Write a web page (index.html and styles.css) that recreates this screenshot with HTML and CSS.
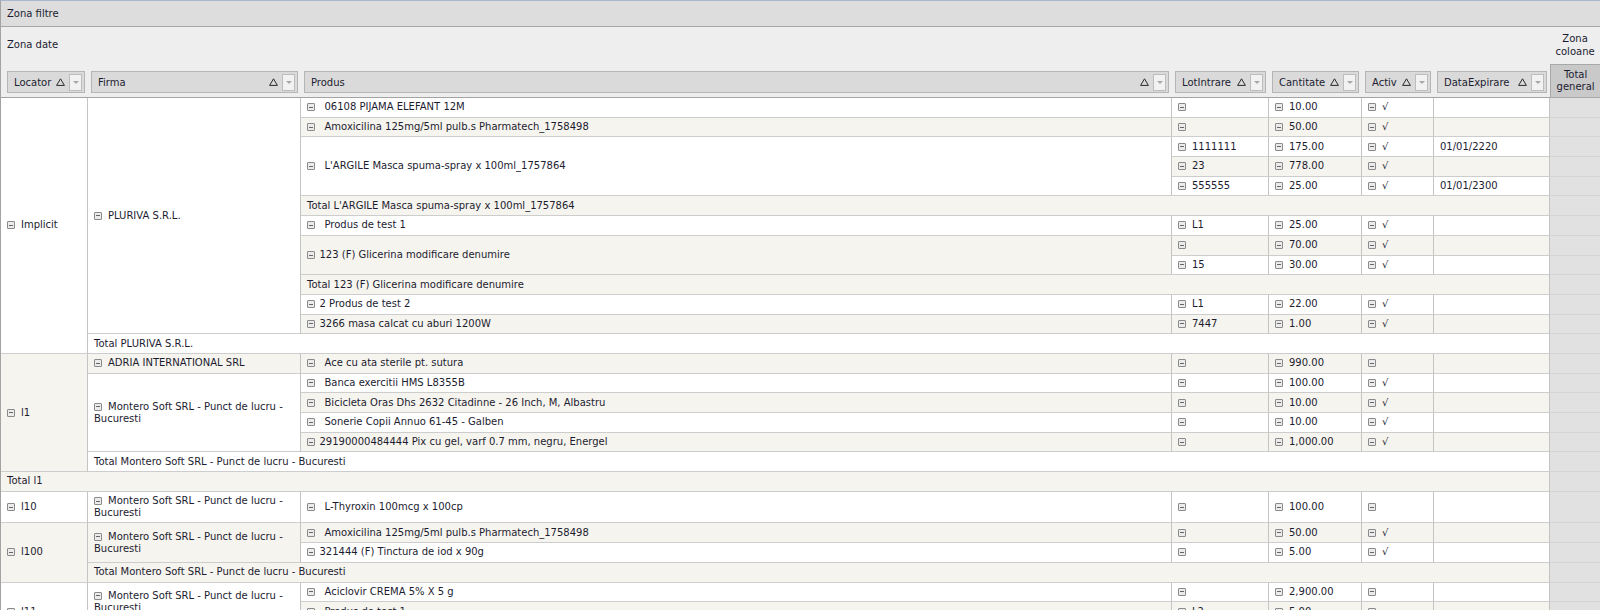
FILE: index.html
```html
<!DOCTYPE html>
<html>
<head>
    <title>Pivot grid</title>
    <link rel="stylesheet" href="styles.css">
</head>
<body>
    <div class="pivot">
        <div class="filter-zone">Zona filtre</div>
        <table class="grid">
            <colgroup>
                <col class="c-loc"><col class="c-firma"><col class="c-prod"><col class="c-lot">
                <col class="c-cant"><col class="c-activ"><col class="c-data"><col class="c-total">
            </colgroup>
            <thead>
                <tr class="zone-row">
                    <td colspan="7">Zona date</td>
                    <td class="col-zone">Zona<br>coloane</td>
                </tr>
                <tr class="field-row">
                    <th class="first"><div class="field"><span class="fname">Locator</span><svg class="sort" viewBox="0 0 9 8"><path d="M4.5 0.8 L8.4 7.4 H0.6 Z"/></svg><span class="drop"></span></div></th>
                    <th><div class="field"><span class="fname">Firma</span><svg class="sort" viewBox="0 0 9 8"><path d="M4.5 0.8 L8.4 7.4 H0.6 Z"/></svg><span class="drop"></span></div></th>
                    <th><div class="field"><span class="fname">Produs</span><svg class="sort" viewBox="0 0 9 8"><path d="M4.5 0.8 L8.4 7.4 H0.6 Z"/></svg><span class="drop"></span></div></th>
                    <th><div class="field"><span class="fname">LotIntrare</span><svg class="sort" viewBox="0 0 9 8"><path d="M4.5 0.8 L8.4 7.4 H0.6 Z"/></svg><span class="drop"></span></div></th>
                    <th><div class="field"><span class="fname">Cantitate</span><svg class="sort" viewBox="0 0 9 8"><path d="M4.5 0.8 L8.4 7.4 H0.6 Z"/></svg><span class="drop"></span></div></th>
                    <th><div class="field"><span class="fname">Activ</span><svg class="sort" viewBox="0 0 9 8"><path d="M4.5 0.8 L8.4 7.4 H0.6 Z"/></svg><span class="drop"></span></div></th>
                    <th><div class="field"><span class="fname">DataExpirare</span><svg class="sort" viewBox="0 0 9 8"><path d="M4.5 0.8 L8.4 7.4 H0.6 Z"/></svg><span class="drop"></span></div></th>
                    <th class="total-head">Total<br>general</th>
                </tr>
            </thead>
            <tbody>
                <tr>
                    <td rowspan="13"><i class="ic"></i>Implicit</td>
                    <td rowspan="12"><i class="ic"></i>PLURIVA S.R.L.</td>
                    <td class="p"><i class="ic w"></i>06108 PIJAMA ELEFANT 12M</td>
                    <td><i class="ic"></i></td><td><i class="ic"></i>10.00</td><td><i class="ic"></i>√</td><td></td><td class="tg"></td>
                </tr>
                <tr class="alt">
                    <td class="p"><i class="ic w"></i>Amoxicilina 125mg/5ml pulb.s Pharmatech_1758498</td>
                    <td><i class="ic"></i></td><td><i class="ic"></i>50.00</td><td><i class="ic"></i>√</td><td></td><td class="tg"></td>
                </tr>
                <tr>
                    <td class="p" rowspan="3"><i class="ic w"></i>L'ARGILE Masca spuma-spray x 100ml_1757864</td>
                    <td><i class="ic"></i>1111111</td><td><i class="ic"></i>175.00</td><td><i class="ic"></i>√</td><td>01/01/2220</td><td class="tg"></td>
                </tr>
                <tr class="alt">
                    <td><i class="ic"></i>23</td><td><i class="ic"></i>778.00</td><td><i class="ic"></i>√</td><td></td><td class="tg"></td>
                </tr>
                <tr>
                    <td><i class="ic"></i>555555</td><td><i class="ic"></i>25.00</td><td><i class="ic"></i>√</td><td>01/01/2300</td><td class="tg"></td>
                </tr>
                <tr class="alt">
                    <td colspan="5">Total L'ARGILE Masca spuma-spray x 100ml_1757864</td><td class="tg"></td>
                </tr>
                <tr>
                    <td class="p"><i class="ic w"></i>Produs de test 1</td>
                    <td><i class="ic"></i>L1</td><td><i class="ic"></i>25.00</td><td><i class="ic"></i>√</td><td></td><td class="tg"></td>
                </tr>
                <tr class="alt">
                    <td class="p" rowspan="2"><i class="ic"></i>123 (F) Glicerina modificare denumire</td>
                    <td><i class="ic"></i></td><td><i class="ic"></i>70.00</td><td><i class="ic"></i>√</td><td></td><td class="tg"></td>
                </tr>
                <tr>
                    <td><i class="ic"></i>15</td><td><i class="ic"></i>30.00</td><td><i class="ic"></i>√</td><td></td><td class="tg"></td>
                </tr>
                <tr class="alt">
                    <td colspan="5">Total 123 (F) Glicerina modificare denumire</td><td class="tg"></td>
                </tr>
                <tr>
                    <td class="p"><i class="ic"></i>2 Produs de test 2</td>
                    <td><i class="ic"></i>L1</td><td><i class="ic"></i>22.00</td><td><i class="ic"></i>√</td><td></td><td class="tg"></td>
                </tr>
                <tr class="alt">
                    <td class="p"><i class="ic"></i>3266 masa calcat cu aburi 1200W</td>
                    <td><i class="ic"></i>7447</td><td><i class="ic"></i>1.00</td><td><i class="ic"></i>√</td><td></td><td class="tg"></td>
                </tr>
                <tr>
                    <td colspan="6">Total PLURIVA S.R.L.</td><td class="tg"></td>
                </tr>
                <tr class="alt">
                    <td rowspan="6"><i class="ic"></i>l1</td>
                    <td><i class="ic"></i>ADRIA INTERNATIONAL SRL</td>
                    <td class="p"><i class="ic w"></i>Ace cu ata sterile pt. sutura</td>
                    <td><i class="ic"></i></td><td><i class="ic"></i>990.00</td><td><i class="ic"></i></td><td></td><td class="tg"></td>
                </tr>
                <tr>
                    <td rowspan="4"><i class="ic"></i>Montero Soft SRL - Punct de lucru - Bucuresti</td>
                    <td class="p"><i class="ic w"></i>Banca exercitii HMS L8355B</td>
                    <td><i class="ic"></i></td><td><i class="ic"></i>100.00</td><td><i class="ic"></i>√</td><td></td><td class="tg"></td>
                </tr>
                <tr class="alt">
                    <td class="p"><i class="ic w"></i>Bicicleta Oras Dhs 2632 Citadinne - 26 Inch, M, Albastru</td>
                    <td><i class="ic"></i></td><td><i class="ic"></i>10.00</td><td><i class="ic"></i>√</td><td></td><td class="tg"></td>
                </tr>
                <tr>
                    <td class="p"><i class="ic w"></i>Sonerie Copii Annuo 61-45 - Galben</td>
                    <td><i class="ic"></i></td><td><i class="ic"></i>10.00</td><td><i class="ic"></i>√</td><td></td><td class="tg"></td>
                </tr>
                <tr class="alt">
                    <td class="p"><i class="ic"></i>29190000484444 Pix cu gel, varf 0.7 mm, negru, Energel</td>
                    <td><i class="ic"></i></td><td><i class="ic"></i>1,000.00</td><td><i class="ic"></i>√</td><td></td><td class="tg"></td>
                </tr>
                <tr>
                    <td colspan="6">Total Montero Soft SRL - Punct de lucru - Bucuresti</td><td class="tg"></td>
                </tr>
                <tr class="alt">
                    <td colspan="7">Total l1</td><td class="tg"></td>
                </tr>
                <tr>
                    <td><i class="ic"></i>l10</td>
                    <td><i class="ic"></i>Montero Soft SRL - Punct de lucru - Bucuresti</td>
                    <td class="p"><i class="ic w"></i>L-Thyroxin 100mcg x 100cp</td>
                    <td><i class="ic"></i></td><td><i class="ic"></i>100.00</td><td><i class="ic"></i></td><td></td><td class="tg"></td>
                </tr>
                <tr class="alt">
                    <td rowspan="3"><i class="ic"></i>l100</td>
                    <td rowspan="2"><i class="ic"></i>Montero Soft SRL - Punct de lucru - Bucuresti</td>
                    <td class="p"><i class="ic w"></i>Amoxicilina 125mg/5ml pulb.s Pharmatech_1758498</td>
                    <td><i class="ic"></i></td><td><i class="ic"></i>50.00</td><td><i class="ic"></i>√</td><td></td><td class="tg"></td>
                </tr>
                <tr>
                    <td class="p"><i class="ic"></i>321444 (F) Tinctura de iod x 90g</td>
                    <td><i class="ic"></i></td><td><i class="ic"></i>5.00</td><td><i class="ic"></i>√</td><td></td><td class="tg"></td>
                </tr>
                <tr class="alt">
                    <td colspan="6">Total Montero Soft SRL - Punct de lucru - Bucuresti</td><td class="tg"></td>
                </tr>
                <tr>
                    <td rowspan="3"><i class="ic"></i>l11</td>
                    <td rowspan="2"><i class="ic"></i>Montero Soft SRL - Punct de lucru - Bucuresti</td>
                    <td class="p"><i class="ic w"></i>Aciclovir CREMA 5% X 5 g</td>
                    <td><i class="ic"></i></td><td><i class="ic"></i>2,900.00</td><td><i class="ic"></i></td><td></td><td class="tg"></td>
                </tr>
                <tr class="alt">
                    <td class="p"><i class="ic w"></i>Produs de test 1</td>
                    <td><i class="ic"></i>L2</td><td><i class="ic"></i>5.00</td><td><i class="ic"></i></td><td></td><td class="tg"></td>
                </tr>
                <tr>
                    <td colspan="6">Total Montero Soft SRL - Punct de lucru - Bucuresti</td><td class="tg"></td>
                </tr>
                <tr class="alt">
                    <td colspan="7">Total l11</td><td class="tg"></td>
                </tr>
            </tbody>
        </table>
    </div>
</body>
</html>
```

FILE: styles.css
```css
body {
    margin: 0;
    background: #fff;
    font-family: "DejaVu Sans", Verdana, sans-serif;
    font-size: 10px;
    color: #1c1c30;
    overflow: hidden;
}

.pivot {
    width: 1599px;
    border-left: 1px solid #a3a3a3;
    border-top: 1px solid #a9b8cc;
}

.filter-zone {
    height: 25px;
    line-height: 25px;
    padding-left: 6px;
    background: #dddddd;
    border-bottom: 1px solid #a6a6a6;
}

.grid {
    width: 1599px;
    table-layout: fixed;
    border-collapse: separate;
    border-spacing: 0;
}

.c-loc { width: 87px; }
.c-firma { width: 213px; }
.c-prod { width: 871px; }
.c-lot { width: 97px; }
.c-cant { width: 93px; }
.c-activ { width: 72px; }
.c-data { width: 116px; }
.c-total { width: 50px; }

/* zona date / zona coloane */
.zone-row td {
    height: 37px;
    padding: 0 6px;
    background: #eeeeee;
    vertical-align: middle;
    line-height: 12.5px;
}

.zone-row td.col-zone {
    padding: 0;
    text-align: center;
}

.field-row th {
    padding: 7px 3px 4px 3px;
    background: #eeeeee;
    border-bottom: 1px solid #a3a3a3;
    font-weight: normal;
    text-align: left;
    vertical-align: top;
}

.field-row th.first {
    padding-left: 6px;
}

.field {
    display: flex;
    align-items: center;
    height: 20px;
    padding: 0 2px 0 6px;
    border: 1px solid #b5b5b5;
    background: #dadada;
}

.fname {
    flex: 1;
    white-space: nowrap;
    overflow: hidden;
}

.sort {
    width: 9px;
    height: 8px;
    margin-right: 4px;
    fill: none;
    stroke: #2a2a2a;
    stroke-width: 1;
}

.drop {
    display: flex;
    align-items: center;
    justify-content: center;
    width: 11px;
    height: 15px;
    border: 1px solid #bdbdbd;
    background: #f2f2f2;
}

.drop::after {
    content: "";
    border-left: 3px solid transparent;
    border-right: 3px solid transparent;
    border-top: 3px solid #a8a8a8;
}

.field-row th.total-head {
    padding: 0;
    background: #c9c9c9;
    border: 1px solid #a8a8a8;
    border-right: 0;
    text-align: center;
    vertical-align: middle;
    line-height: 12.5px;
}

/* data */
.grid tbody td {
    padding: 3.35px 6px;
    line-height: 12px;
    background: #fff;
    border-right: 1px solid #c4c4c4;
    border-bottom: 1px solid #cdcdcd;
    vertical-align: middle;
    overflow: hidden;
}

.grid tbody .alt td {
    background: #f6f4ee;
}

.grid tbody td.tg {
    background: #e1e1e1;
    border-right: 0;
    border-bottom-color: #d5d5d5;
}

.ic {
    display: inline-block;
    width: 6px;
    height: 6px;
    margin-right: 6px;
    border: 1px solid #8a8a8a;
    border-radius: 1px;
    background: linear-gradient(#666, #666) center / 4px 1px no-repeat, #ebebeb;
    vertical-align: -1px;
}

.p .ic {
    margin-right: 4.5px;
}

.p .ic.w {
    margin-right: 9.5px;
}
```
